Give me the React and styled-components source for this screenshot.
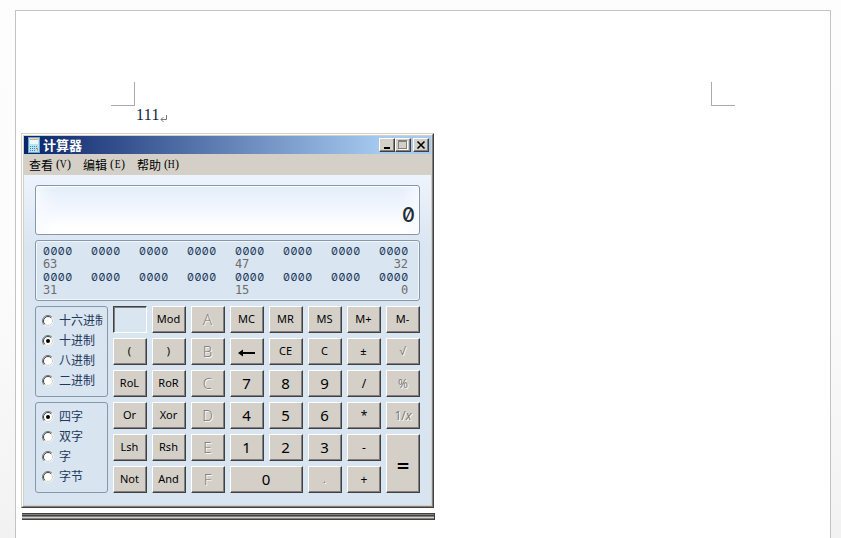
import React from 'react';
import styled, { createGlobalStyle, css } from 'styled-components';

const Global = createGlobalStyle`
  * { box-sizing: border-box; }
  body { margin: 0; overflow: hidden; font-family: "Open Sans", "Noto Sans CJK SC", sans-serif; }
`;

const Desk = styled.div`
  height: 538px;
  padding: 10px 10px 0 15px;
  overflow: hidden;
  background: linear-gradient(#fdfdfd, #fcfcfc 50%, #f2f2f3);
`;

const Paper = styled.main`
  width: 816px;
  height: 560px;
  border: 1px solid #c3c3c3;
  background: #fff;
`;

const Margins = styled.div`
  display: flex;
  justify-content: space-between;
  padding: 71px 95px 0;
`;

const Corner = styled.i`
  width: 24px;
  height: 24px;
  border-bottom: 1px solid #ababab;
  ${(p) => (p.$side === 'left' ? 'border-right' : 'border-left')}: 1px solid #ababab;
`;

const Paragraph = styled.p`
  display: flex;
  align-items: flex-start;
  height: 27px;
  margin: 0 0 0 120px;
  font: 16px/18px "Liberation Serif", serif;
  letter-spacing: 0.4px;
  color: #101c40;
`;

const ReturnMark = styled.svg`
  display: block;
  margin-top: 9px;
`;

const Window = styled.section`
  width: 413px;
  height: 375px;
  margin-left: 5px;
  border: 1px solid;
  border-color: #d4d0c8 #404040 #404040 #d4d0c8;
`;

const Frame = styled.div`
  height: 373px;
  border: 1px solid;
  border-color: #fff #808080 #808080 #fff;
`;

const Inner = styled.div`
  height: 371px;
  border: 1px solid #d4d0c8;
`;

const TitleBar = styled.header`
  display: flex;
  align-items: center;
  height: 18px;
  padding: 0 2px 0 4px;
  background: linear-gradient(90deg, #0a246a, #a6caf0 88%, #a6caf0);
`;

const Title = styled.h1`
  flex: 1;
  margin: -1px 0 0 3px;
  font: bold 13px/18px "Noto Sans CJK SC", sans-serif;
  color: #fff;
`;

const raised = css`
  border: 1px solid;
  border-color: #fff #404040 #404040 #fff;
  box-shadow: inset -1px -1px #808080;
  background: #d4d0c8;
`;

const Caption = styled.button`
  ${raised}
  display: grid;
  place-items: center;
  width: 16px;
  height: 14px;
  margin-left: ${(p) => p.$gap || 0}px;
  padding: 0;
`;

const MenuBar = styled.nav`
  display: flex;
  gap: 12px;
  height: 21px;
  padding-left: 5px;
  background: #d4d0c8;
`;

const MenuItem = styled.span`
  display: flex;
  width: 42px;
  font: 12px/21px "Noto Sans CJK SC", sans-serif;
  white-space: nowrap;
  color: #000;
`;

const Accelerator = styled.span`
  display: flex;
  width: 18px;
  justify-content: space-between;
  padding: 0 0 0 3px;
  font: 12px/21px "Liberation Serif", serif;
`;

const Key = styled.span`
  display: inline-block;
  transform: scaleX(0.8);
  margin: 0 -2px;
`;

const Body = styled.div`
  display: flex;
  flex-direction: column;
  gap: 5px;
  height: 330px;
  padding: 10px 11px 0;
  background: linear-gradient(#eef4fd, #d9e5f1 22%, #d8e4f0);
`;

const panel = css`
  border: 1px solid #8597ad;
  border-radius: 3px;
`;

const Display = styled.output`
  ${panel}
  display: flex;
  justify-content: flex-end;
  height: 50px;
  padding: 17px 4px 0 0;
  background: linear-gradient(#e3edfb, #f4f8fe 55%, #fff 85%);
  box-shadow: inset 0 0 0 1px #fff, inset 22px 0 16px -14px #f7faff, inset -22px 0 16px -14px #f7faff;
  font: 500 20px/25px Inter, sans-serif;
  font-feature-settings: "zero" 1;
  color: #222c38;
`;

const Bits = styled.div`
  ${panel}
  display: grid;
  grid-template-columns: repeat(8, 48px);
  grid-template-rows: repeat(4, 13px);
  height: 61px;
  padding: 4px 0 0 7px;
  box-shadow: inset 0 0 0 1px #f3f7fb;
`;

const Nibbles = styled.span`
  font: 11px/13px Inter, sans-serif;
  font-feature-settings: "zero" 1;
  letter-spacing: 0.45px;
  color: #1e395b;
`;

const BitIndex = styled.span`
  width: 29px;
  text-align: ${(p) => (p.$end ? 'right' : 'left')};
  font: 12px/13px "DejaVu Sans Mono", monospace;
  letter-spacing: -0.1px;
  color: #6d6d6d;
`;

const Controls = styled.div`
  display: flex;
  gap: 5px;
`;

const Groups = styled.div`
  display: flex;
  flex-direction: column;
  gap: 5px;
  width: 73px;
`;

const RadioGroup = styled.fieldset`
  ${panel}
  height: 91px;
  min-width: 0;
  margin: 0;
  padding: 3px 4px 0 6px;
`;

const RadioRow = styled.label`
  display: flex;
  align-items: center;
  gap: 5px;
  height: 20px;
  overflow: hidden;
  font: 12px/20px "Noto Sans CJK SC", sans-serif;
  white-space: nowrap;
  color: #1e395b;
`;

const RadioDot = styled.svg`
  flex: none;
  margin-top: 2px;
`;

const Keys = styled.div`
  display: grid;
  grid-template-columns: repeat(8, 34px);
  grid-template-rows: repeat(6, 27px);
  gap: 5px;
`;

const sizes = { small: '11px', digit: '15px', equals: '22px', fn: '12px' };
const insets = { small: '0 1px 2px 0', digit: '0 1px 1px 0', equals: '4px 0 1px', fn: '1px 0 0' };

const CalcKey = styled.button`
  ${raised}
  display: flex;
  align-items: center;
  justify-content: center;
  min-width: 0;
  padding: ${(p) => insets[p.$size]};
  grid-column: span ${(p) => p.$cols || 1};
  grid-row: span ${(p) => p.$rows || 1};
  font: ${(p) => sizes[p.$size]}/1 "Noto Sans", "Open Sans", sans-serif;
  font-weight: ${(p) => (p.$size === 'equals' ? 600 : 400)};
  color: #000;
  ${(p) => p.$off && css`
    color: #747472;
    text-shadow: 1px 1px #fff;
    font-weight: ${p.$size === 'digit' ? 300 : 400};
    font-family: "Open Sans", sans-serif;
  `}
`;

const Blank = styled.div`
  border: 1px solid;
  border-color: #404040 #fff #fff #404040;
  box-shadow: inset 1px 1px #808080;
`;

const Strip = styled.div`
  width: 413px;
  height: 7px;
  margin: 5px 0 0 6px;
  border-right: 1px solid #404040;
  background: linear-gradient(#404040 0 1px, #808080 1px 2px, #404040 2px 3px, #808080 3px 4px, #d4d0c8 4px 5px, #808080 5px 6px, #404040 6px 7px);
`;

function CalculatorIcon() {
  return (
    <svg width="12" height="16" viewBox="0 0 12 16" shapeRendering="crispEdges">
      <path fill="#65a9cd" d="M0 0h12v16H0z" />
      <path fill="#b9e2f5" d="M1 1h10v14H1z" />
      <path fill="#f3a55a" d="M2 2h8v1H2z" />
      <path fill="#edf8ff" d="M2 3h8v4H2z" />
      <path fill="#3e86b7" d="M2 9h1v1H2zM4 9h1v1H4zM6 9h1v1H6zM8 9h1v1H8zM2 11h1v1H2zM4 11h1v1H4zM6 11h1v1H6zM8 11h1v1H8zM2 13h1v1H2zM4 13h1v1H4zM6 13h1v1H6z" />
      <path fill="#f09136" d="M9 11h1v3H9z" />
    </svg>
  );
}

function Radio({ label, checked }) {
  return (
    <RadioRow>
      <RadioDot width="12" height="12" viewBox="0 0 12 12">
        <circle cx="6" cy="6" r="5.5" fill="#fff" />
        <path d="M2.1 9.9A5.5 5.5 0 0 1 9.9 2.1" fill="none" stroke="#777" />
        <path d="M2.8 9.2A4.5 4.5 0 0 1 9.2 2.8" fill="none" stroke="#404040" />
        <path d="M2.8 9.2A4.5 4.5 0 0 0 9.2 2.8" fill="none" stroke="#d4d0c8" />
        {checked && <circle cx="6" cy="6" r="2" fill="#000" />}
      </RadioDot>
      {label}
    </RadioRow>
  );
}

const menus = [['查看', 'V'], ['编辑', 'E'], ['帮助', 'H']];
const indices = [['63', '', '', '', '47', '', '', '32'], ['31', '', '', '', '15', '', '', '0']];

const small = (t) => ({ t, size: 'small' });
const digit = (t) => ({ t, size: 'digit' });
const fn = (t) => ({ t, size: 'fn' });
const off = (t, size = 'digit') => ({ t, size, off: true });

const keys = [
  small('Mod'), off('A'), small('MC'), small('MR'), small('MS'), small('M+'), small('M-'),
  small('('), small(')'), off('B'), { t: 'back', size: 'fn' }, small('CE'), small('C'), small('±'), off('√', 'small'),
  small('RoL'), small('RoR'), off('C'), digit('7'), digit('8'), digit('9'), fn('/'), off('%', 'fn'),
  small('Or'), small('Xor'), off('D'), digit('4'), digit('5'), digit('6'), fn('*'), { ...off('1/x', 'fn'), reciprocal: true },
  small('Lsh'), small('Rsh'), off('E'), digit('1'), digit('2'), digit('3'), fn('-'), { t: '=', size: 'equals', rows: 2 },
  small('Not'), small('And'), off('F'), { ...digit('0'), cols: 2 }, off('.', 'small'), fn('+'),
];

function KeyFace({ k }) {
  if (k.t === 'back') {
    return (
      <svg width="18" height="9" viewBox="0 0 18 9">
        <path d="M0 5l5-3.5v2.5h12v2H5v2.5z" fill="#000" />
      </svg>
    );
  }
  if (k.reciprocal) return <span>1/<i>x</i></span>;
  return k.t;
}

export default function App() {
  return (
    <>
      <Global />
      <Desk>
        <Paper>
          <Margins><Corner $side="left" /><Corner $side="right" /></Margins>
          <Paragraph>
            111
            <ReturnMark width="8" height="8" viewBox="0 0 8 8">
              <path d="M6.5 0v4.5H1M3.5 2L1 4.5 3.5 7" fill="none" stroke="#777" />
            </ReturnMark>
          </Paragraph>
          <Window>
            <Frame>
              <Inner>
                <TitleBar>
                  <CalculatorIcon />
                  <Title>计算器</Title>
                  <Caption aria-label="Minimize">
                    <svg width="12" height="10"><path d="M3 7h6v2H3z" /></svg>
                  </Caption>
                  <Caption aria-label="Maximize">
                    <svg width="12" height="10" shapeRendering="crispEdges">
                      <path d="M2 1h9v9H2z" fill="#fff" />
                      <path d="M1 0h9v9H1z" fill="#808080" />
                      <path d="M2 2h7v6H2z" fill="#d4d0c8" />
                    </svg>
                  </Caption>
                  <Caption aria-label="Close" $gap={2}>
                    <svg width="12" height="10"><path d="M2.5 1.5l7 7M9.5 1.5l-7 7" stroke="#000" strokeWidth="1.6" /></svg>
                  </Caption>
                </TitleBar>
                <MenuBar>
                  {menus.map(([name, key]) => (
                    <MenuItem key={key}>
                      {name}
                      <Accelerator><span>(</span><Key>{key}</Key><span>)</span></Accelerator>
                    </MenuItem>
                  ))}
                </MenuBar>
                <Body>
                  <Display>0</Display>
                  <Bits>
                    {indices.map((row, r) => (
                      <React.Fragment key={r}>
                        {row.map((_, i) => <Nibbles key={i}>0000</Nibbles>)}
                        {row.map((n, i) => <BitIndex key={i} $end={i === 7}>{n}</BitIndex>)}
                      </React.Fragment>
                    ))}
                  </Bits>
                  <Controls>
                    <Groups>
                      <RadioGroup>
                        <Radio label="十六进制" />
                        <Radio label="十进制" checked />
                        <Radio label="八进制" />
                        <Radio label="二进制" />
                      </RadioGroup>
                      <RadioGroup>
                        <Radio label="四字" checked />
                        <Radio label="双字" />
                        <Radio label="字" />
                        <Radio label="字节" />
                      </RadioGroup>
                    </Groups>
                    <Keys>
                      <Blank />
                      {keys.map((k, i) => (
                        <CalcKey key={i} $size={k.size} $off={k.off} $cols={k.cols} $rows={k.rows}>
                          <KeyFace k={k} />
                        </CalcKey>
                      ))}
                    </Keys>
                  </Controls>
                </Body>
              </Inner>
            </Frame>
          </Window>
          <Strip />
        </Paper>
      </Desk>
    </>
  );
}
